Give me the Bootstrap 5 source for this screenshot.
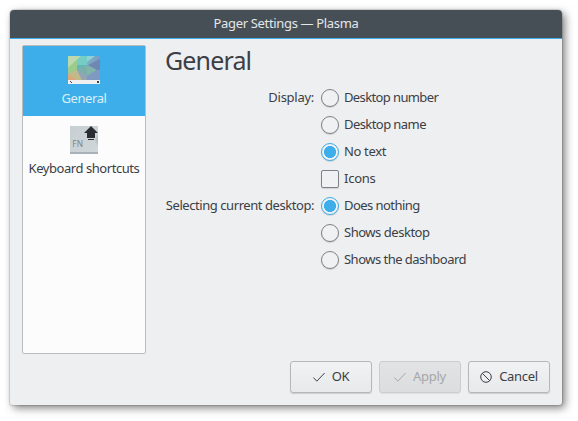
<!DOCTYPE html>
<html lang="en">
<head>
<meta charset="utf-8">
<title>Pager Settings — Plasma</title>
<link href="https://cdn.jsdelivr.net/npm/bootstrap@5.3.0/dist/css/bootstrap.min.css" rel="stylesheet">
<style>
body{background:#fff;font:13px/18px "Noto Sans","Open Sans",sans-serif;color:#3b4045;width:578px;height:421px;padding:10px 16px 16px 10px;overflow:hidden;letter-spacing:-.15px}
.window{width:552px;height:395px;background:#eeeff1;border-radius:4px 4px 3px 3px;box-shadow:0 0 1px 1px rgba(0,0,0,.13),3px 3px 8px 0 rgba(0,0,0,.5);overflow:hidden}
.titlebar{height:29px;background:#474f56;border-bottom:1px solid #3daee9;color:#e4e6e8;padding-bottom:2px}
.pages{width:124px;height:309px;background:#fcfcfc;border:1px solid #b9bbbd;border-radius:2px;margin:6px 0 0 12px}
.page-item{height:70px;padding-top:10px}
.page-item.active{background:#3daee9;color:#dceefa}
.page-item svg{display:block}
.page-item span{margin-top:5px}
.settings{padding:5px 0 0 19px}
.heading{font-size:25px;line-height:32px;margin:0 0 8px;font-weight:400;letter-spacing:-.85px}
.option-row{height:27px}
.option-row span,.option-row label{padding-bottom:1px}
.row-label{width:149px;margin-right:7px;white-space:nowrap}
.t-title{letter-spacing:-.34px}
.t-general{letter-spacing:-.4px}
.t-keys{letter-spacing:-.44px}
.t-number{letter-spacing:-.62px}
.t-name{letter-spacing:-.57px}
.t-none{letter-spacing:-.35px}
.t-icons{letter-spacing:-.25px}
.t-select{letter-spacing:-.44px}
.t-nothing{letter-spacing:-.55px}
.t-shows{letter-spacing:-.47px}
.t-dash{letter-spacing:-.52px}
.t-display{letter-spacing:-.27px}
.option-row .form-check-input{width:18px;height:18px;margin:0 5px 0 0;border:1px solid #7f8285;background-color:#f0f1f2;background-image:none;box-shadow:0 1px 1px rgba(0,0,0,.13);flex-shrink:0}
.option-row .form-check-input[type=checkbox]{border-radius:2px}
.option-row .form-check-input:checked{border-color:#3daee9;background-image:radial-gradient(circle,#3daee9 5.7px,transparent 6.3px);background-size:100% 100%}
.actions{padding:7px 12px 0 0;gap:7px}
.push{width:82px;height:32px;padding:0;border:1px solid #b5b7b9;border-radius:3px;background:linear-gradient(#f1f2f3,#e8e9ea);box-shadow:0 1px 1px rgba(0,0,0,.15);font-size:13px;line-height:18px;color:#3b4045;gap:7px;letter-spacing:-.3px}
.push span{padding-bottom:2px}
.push:disabled{opacity:1;background:linear-gradient(#e2e3e4,#dcddde);border-color:#cccdcf;color:#a5a7a9;box-shadow:0 1px 1px rgba(0,0,0,.06)}
</style>
</head>
<body>
<main class="window d-flex flex-column">
  <header class="titlebar d-flex align-items-center justify-content-center flex-shrink-0"><span class="t-title">Pager Settings — Plasma</span></header>
  <div class="d-flex">
    <nav class="pages flex-shrink-0">
      <div class="page-item active d-flex flex-column align-items-center">
        <svg width="32" height="28" viewBox="0 0 32 28">
          <defs><linearGradient id="sky" x1="0" x2="1" y1="0" y2=".25"><stop stop-color="#a8d39a"/><stop offset=".4" stop-color="#68c6c0"/><stop offset=".7" stop-color="#80a9c4"/><stop offset="1" stop-color="#7898c8"/></linearGradient></defs>
          <path fill="url(#sky)" d="M0 0h32v24H0z"/>
          <path fill="#bcd9ae" d="M0 0h13L0 12z"/><path fill="#9ccb8b" d="m0 12 9-8v10L0 18z"/>
          <path fill="#c4b98a" d="m0 18 9-4 5 10H0z"/><path fill="#dba777" d="m0 18 8 6H0z"/>
          <path fill="#75cdc5" d="m9 4 4-4h6v9H9z"/><path fill="#8bd5d2" d="M19 0h8l-8 6z"/>
          <path fill="#63b8b5" d="m9 9 10 0-10 5z"/><path fill="#7caeaa" d="m9 14 10-5v11z"/>
          <path fill="#80b5a8" d="m19 9 10 5-10 6z"/><path fill="#7088b1" d="M32 3v11h-3l-9-5z"/>
          <path fill="#8099c2" d="M29 14h3v10H19v-4z"/><path fill="#94a4b4" d="m9 14 10 6v4h-5z"/>
          <path fill="#f1eff0" d="M0 24h32v4H0z"/><path fill="#3c4045" d="M2 25h1v1h1v1H3v-1H2zM29 25h2v2h-2z"/>
        </svg>
        <span class="t-general">General</span>
      </div>
      <div class="page-item d-flex flex-column align-items-center">
        <svg width="28" height="28" viewBox="0 0 28 28">
          <defs><linearGradient id="key" x1="0" x2="1" y1="0" y2="1"><stop stop-color="#c8cfd2"/><stop offset="1" stop-color="#d0d7da"/></linearGradient></defs>
          <path fill="url(#key)" d="M0 0h28v28H0z"/><path fill="#a9b2b8" d="M0 26h28v2H0z"/>
          <path fill="#bac1c4" d="m25 14 3-6v12z"/>
          <text x="2.3" y="21" font-family="Noto Sans,sans-serif" font-size="8.3" letter-spacing=".1" fill="#7c8183">FN</text>
          <path fill="#2a2e32" d="M21 0l7 7h-3v5h-8V7h-3zM18 13h6v1h-6z"/>
        </svg>
        <span class="t-keys text-nowrap">Keyboard shortcuts</span>
      </div>
    </nav>
    <section class="settings">
      <h1 class="heading">General</h1>
      <div class="option-row d-flex align-items-center"><span class="row-label t-display text-end">Display:</span><input class="form-check-input" type="radio" name="display" id="o1"><label class="t-number" for="o1">Desktop number</label></div>
      <div class="option-row d-flex align-items-center"><span class="row-label"></span><input class="form-check-input" type="radio" name="display" id="o2"><label class="t-name" for="o2">Desktop name</label></div>
      <div class="option-row d-flex align-items-center"><span class="row-label"></span><input class="form-check-input" type="radio" name="display" id="o3" checked><label class="t-none" for="o3">No text</label></div>
      <div class="option-row d-flex align-items-center"><span class="row-label"></span><input class="form-check-input" type="checkbox" id="o4"><label class="t-icons" for="o4">Icons</label></div>
      <div class="option-row d-flex align-items-center"><span class="row-label t-select text-end">Selecting current desktop:</span><input class="form-check-input" type="radio" name="select" id="o5" checked><label class="t-nothing" for="o5">Does nothing</label></div>
      <div class="option-row d-flex align-items-center"><span class="row-label"></span><input class="form-check-input" type="radio" name="select" id="o6"><label class="t-shows" for="o6">Shows desktop</label></div>
      <div class="option-row d-flex align-items-center"><span class="row-label"></span><input class="form-check-input" type="radio" name="select" id="o7"><label class="t-dash" for="o7">Shows the dashboard</label></div>
    </section>
  </div>
  <footer class="actions d-flex justify-content-end">
    <button class="push btn d-flex align-items-center justify-content-center"><svg width="12" height="12" viewBox="0 0 12 12" fill="none" stroke="currentColor" stroke-width="1"><path d="m.4 6.5 3.4 3.7L11.6 2"/></svg><span>OK</span></button>
    <button class="push btn d-flex align-items-center justify-content-center" disabled><svg width="12" height="12" viewBox="0 0 12 12" fill="none" stroke="currentColor" stroke-width="1"><path d="m.4 6.5 3.4 3.7L11.6 2"/></svg><span>Apply</span></button>
    <button class="push btn d-flex align-items-center justify-content-center"><svg width="12" height="12" viewBox="0 0 12 12" fill="none" stroke="currentColor" stroke-width="1"><circle cx="6" cy="6" r="5.3"/><path d="m2.2 2.2 7.6 7.6"/></svg><span>Cancel</span></button>
  </footer>
</main>
<script src="https://cdn.jsdelivr.net/npm/bootstrap@5.3.0/dist/js/bootstrap.bundle.min.js"></script>
</body>
</html>
